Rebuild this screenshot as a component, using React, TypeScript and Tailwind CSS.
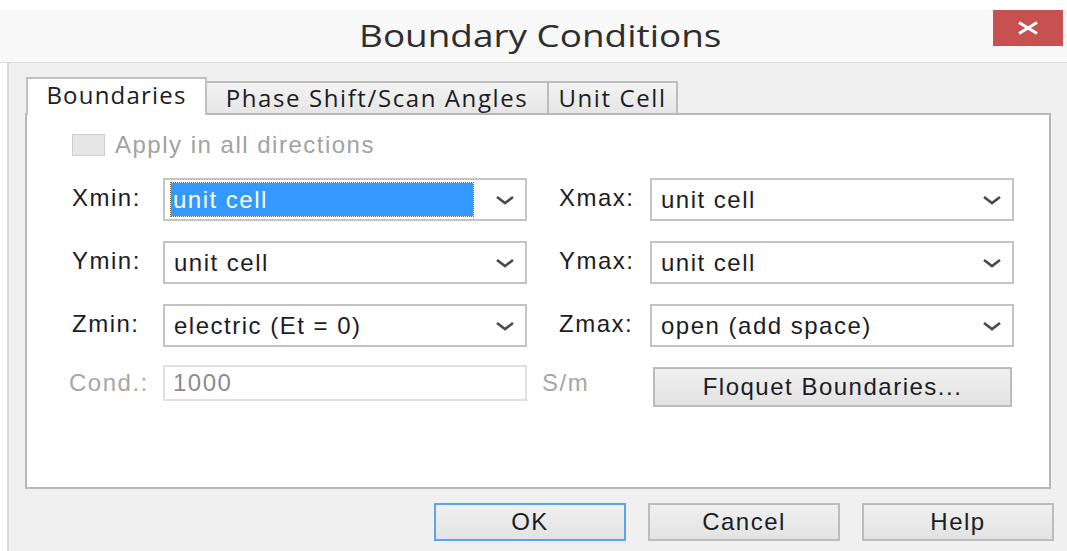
import React from "react";

const labelFont = "font-['Liberation_Sans',Arial,sans-serif] text-[24px] tracking-[1.5px]";
const uiFont = "font-['Open_Sans','Noto_Sans',sans-serif]";

function Chevron() {
  return (
    <svg width="20" height="10" viewBox="0 0 20 10" className="shrink-0">
      <polyline points="2,2 10,8 18,2" fill="none" stroke="#4a4a4a" strokeWidth="2.6" />
    </svg>
  );
}

function Select({ value, focused }: { value: string; focused?: boolean }) {
  return (
    <div className="w-[364px] h-[43px] border-2 border-[#c4c4c4] bg-white flex items-center pl-[6px] pr-[10px]">
      {focused ? (
        <div className="flex-1 h-[33px] mr-[22px] bg-[#3399ff] outline-1 outline-dotted outline-[#7a5a30] flex items-center pl-[2px]">
          <span className={`${labelFont} text-white leading-none`}>{value}</span>
        </div>
      ) : (
        <div className="flex-1 flex items-center pl-[3px]">
          <span className={`${labelFont} text-[#1c1c24] leading-none`}>{value}</span>
        </div>
      )}
      <Chevron />
    </div>
  );
}

function FieldRow({
  left,
  leftValue,
  right,
  rightValue,
  focused,
}: {
  left: string;
  leftValue: string;
  right: string;
  rightValue: string;
  focused?: boolean;
}) {
  return (
    <div className="flex items-center h-[43px]">
      <div className={`w-[91px] -mt-[3px] ${labelFont} text-[#1c1c24]`}>{left}</div>
      <Select value={leftValue} focused={focused} />
      <div className="w-[15px]" />
      <div className={`w-[108px] pl-[17px] -mt-[3px] ${labelFont} text-[#1c1c24]`}>{right}</div>
      <Select value={rightValue} />
    </div>
  );
}

function Tab({ label, active, width }: { label: string; active?: boolean; width: string }) {
  if (active) {
    return (
      <div
        className={`${width} h-[38px] -mb-[2px] bg-white border-2 border-b-0 border-[#c0c0c0] flex items-center justify-center pb-[4px] relative z-10`}
      >
        <span className={`${uiFont} text-[24px] tracking-[1.2px] text-[#1c1c24] leading-none`}>{label}</span>
      </div>
    );
  }
  return (
    <div
      className={`${width} h-[32px] bg-gradient-to-b from-[#f3f3f3] to-[#e6e6e6] border-2 border-b-0 border-[#bdbdbd] -ml-[2px] flex items-center justify-center`}
    >
      <span className={`${uiFont} text-[24px] tracking-[1.6px] text-[#1c1c24] leading-none`}>{label}</span>
    </div>
  );
}

function Button({ label, primary }: { label: string; primary?: boolean }) {
  return (
    <div
      className={`w-[192px] h-[38px] border-2 ${
        primary ? "border-[#5aa6ee]" : "border-[#bcbcbc]"
      } bg-gradient-to-b from-[#f0f0f0] to-[#e3e3e3] flex items-center justify-center`}
    >
      <span className={`${labelFont} text-[#1c1c24] leading-none`}>{label}</span>
    </div>
  );
}

export default function App() {
  return (
    <div className="w-[1067px] h-[551px] bg-white overflow-hidden flex flex-col">
      <div className="h-[10px] shrink-0" />

      {/* title bar */}
      <div className="h-[53px] shrink-0 bg-[#f8f8f8] border-b border-[#dcdcdc] relative flex items-center justify-center">
        <span
          className={`${uiFont} inline-block text-[31px] scale-x-[1.19] text-[#2e2e2e] leading-none -mt-[1px] ml-[14px]`}
        >
          Boundary Conditions
        </span>
        <div className="absolute right-[4px] top-0 w-[70px] h-[36px] bg-[#c75050] flex items-center justify-center">
          <svg width="22" height="14" viewBox="0 0 22 14">
            <line x1="2" y1="1.5" x2="20" y2="12.5" stroke="white" strokeWidth="3" />
            <line x1="20" y1="1.5" x2="2" y2="12.5" stroke="white" strokeWidth="3" />
          </svg>
        </div>
      </div>

      {/* dialog body */}
      <div className="flex-1 ml-[7px] border-l-2 border-[#d9d9d9] bg-[#f0f0f0] pl-[16px] pr-[16px] pt-[14px] flex flex-col">
        <div className="flex items-end pl-[1px]">
          <Tab label="Boundaries" active width="w-[181px]" />
          <Tab label="Phase Shift/Scan Angles" width="w-[344px]" />
          <Tab label="Unit Cell" width="w-[131px]" />
        </div>

        <div className="h-[376px] bg-white border-2 border-[#b8b8b8] pl-[45px] pt-[19px] flex flex-col">
          <div className="flex items-center h-[22px]">
            <div className="w-[33px] h-[22px] bg-[#e6e6e6] border border-[#cdcdcd]" />
            <span className={`${labelFont} text-[#a2a2a2] ml-[10px] leading-none`}>Apply in all directions</span>
          </div>

          <div className="flex flex-col gap-[20px] mt-[22px]">
            <FieldRow left="Xmin:" leftValue="unit cell" right="Xmax:" rightValue="unit cell" focused />
            <FieldRow left="Ymin:" leftValue="unit cell" right="Ymax:" rightValue="unit cell" />
            <FieldRow left="Zmin:" leftValue="electric (Et = 0)" right="Zmax:" rightValue="open (add space)" />
          </div>

          <div className="flex items-start mt-[18px]">
            <div className={`w-[91px] h-[36px] flex items-center -ml-[3px] ${labelFont} text-[#a6a6a6]`}>Cond.:</div>
            <div className="w-[364px] h-[36px] ml-[3px] border-2 border-[#e0e0e0] bg-white flex items-center pl-[8px]">
              <span className={`${labelFont} text-[#8a8a96] leading-none`}>1000</span>
            </div>
            <div className={`w-[126px] h-[36px] flex items-center ${labelFont} text-[#a6a6a6] pl-[15px]`}>S/m</div>
            <div className="w-[359px] h-[40px] mt-[2px] border-2 border-[#bcbcbc] bg-gradient-to-b from-[#f0f0f0] to-[#e3e3e3] flex items-center justify-center">
              <span className={`${labelFont} text-[#1c1c24] leading-none`}>Floquet Boundaries...</span>
            </div>
          </div>
        </div>

        <div className="flex justify-end gap-[22px] mt-[14px] -mr-[3px]">
          <Button label="OK" primary />
          <Button label="Cancel" />
          <Button label="Help" />
        </div>
      </div>
    </div>
  );
}
